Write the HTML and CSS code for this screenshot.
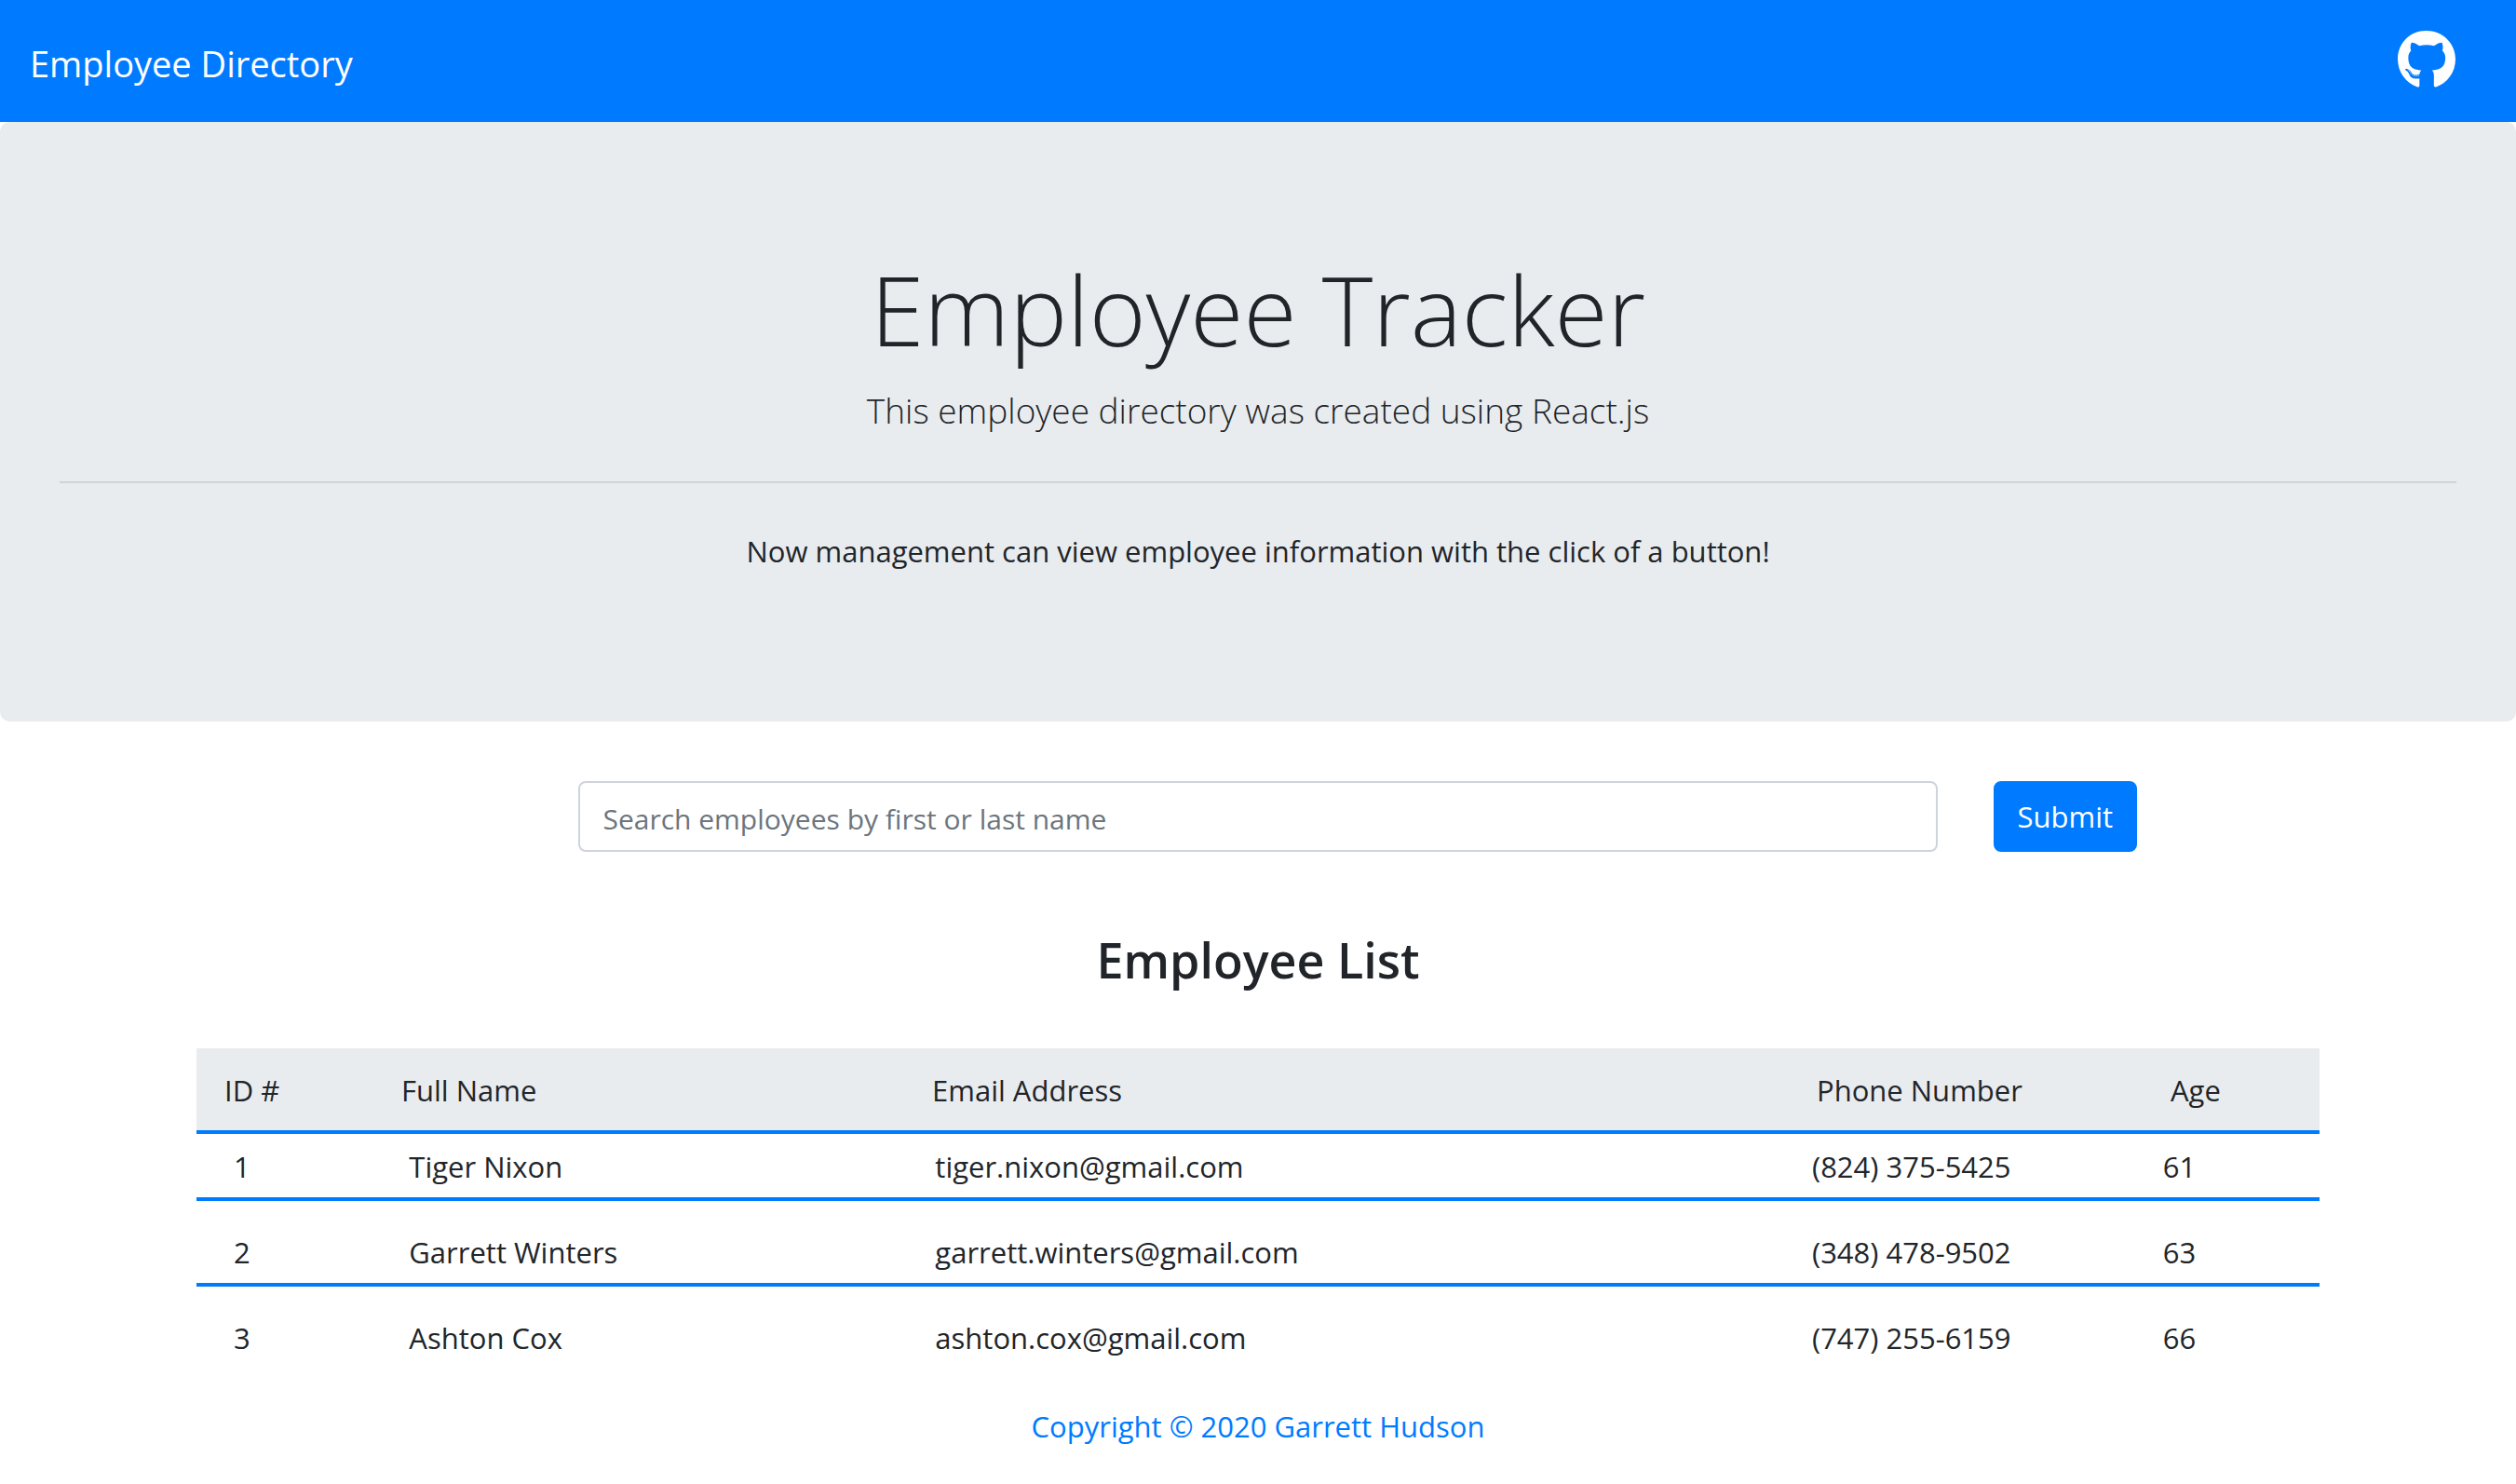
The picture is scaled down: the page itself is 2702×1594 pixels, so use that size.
FILE: index.html
```html
<!DOCTYPE html>
<html lang="en">
<head>
  <meta charset="utf-8">
  <meta name="viewport" content="width=device-width, initial-scale=1">
  <title>Employee Directory</title>
  <link rel="stylesheet" href="styles.css">
</head>
<body>
  <nav class="navbar">
    <a class="navbar-brand" href="#">Employee Directory</a>
    <a class="navbar-link" href="#" aria-label="GitHub">
      <svg class="github-icon" viewBox="0 0 496 512" aria-hidden="true"><path fill="currentColor" d="M165.900 397.400c0 2-2.300 3.600-5.200 3.600-3.300.3-5.600-1.300-5.600-3.600 0-2 2.300-3.600 5.200-3.600 3-.3 5.600 1.300 5.600 3.600zm-31.100-4.500c-.7 2 1.300 4.300 4.300 4.900 2.600 1 5.600 0 6.200-2s-1.300-4.300-4.300-5.200c-2.600-.7-5.500.3-6.200 2.300zm44.200-1.700c-2.900.7-4.900 2.600-4.600 4.900.3 2 2.900 3.300 5.900 2.600 2.900-.7 4.900-2.600 4.600-4.600-.3-1.900-3-3.200-5.900-2.900zM244.800 8C106.100 8 0 113.300 0 252c0 110.900 69.800 205.800 169.500 239.200 12.800 2.300 17.300-5.600 17.300-12.100 0-6.200-.3-40.400-.3-61.400 0 0-70 15-84.700-29.800 0 0-11.400-29.100-27.800-36.600 0 0-22.900-15.700 1.600-15.400 0 0 24.900 2 38.600 25.800 21.900 38.600 58.600 27.500 72.900 20.900 2.300-16 8.800-27.100 16-33.700-55.900-6.200-112.300-14.300-112.300-110.500 0-27.500 7.600-41.300 23.600-58.900-2.600-6.500-11.100-33.300 2.600-67.900 20.900-6.500 69 27 69 27 20-5.600 41.500-8.500 62.800-8.500s42.800 2.900 62.800 8.500c0 0 48.100-33.600 69-27 13.700 34.700 5.200 61.400 2.600 67.900 16 17.700 25.800 31.500 25.800 58.900 0 96.500-58.900 104.200-114.800 110.500 9.200 7.900 17 22.900 17 46.400 0 33.700-.3 75.400-.3 83.600 0 6.500 4.600 14.400 17.300 12.100C428.200 457.800 496 362.900 496 252 496 113.300 383.500 8 244.800 8zM97.200 352.900c-1.300 1-1 3.300.7 5.200 1.600 1.600 3.900 2.300 5.200 1 1.300-1 1-3.300-.7-5.200-1.600-1.600-3.900-2.300-5.200-1zm-10.800-8.100c-.7 1.300.3 2.900 2.300 3.900 1.600 1 3.600.7 4.300-.7.7-1.300-.3-2.900-2.300-3.900-2-.6-3.600-.3-4.300.7zm32.400 35.600c-1.600 1.300-1 4.300 1.300 6.200 2.300 2.300 5.200 2.600 6.500 1 1.300-1.300.7-4.300-1.300-6.200-2.200-2.300-5.200-2.600-6.500-1zm-11.400-14.700c-1.600 1-1.600 3.600 0 5.900 1.600 2.300 4.300 3.300 5.600 2.300 1.600-1.300 1.600-3.900 0-6.200-1.400-2.300-4-3.300-5.600-2z"/></svg>
    </a>
  </nav>

  <header class="jumbotron">
    <h1 class="jumbotron-title">Employee Tracker</h1>
    <p class="jumbotron-lead">This employee directory was created using React.js</p>
    <hr class="jumbotron-rule">
    <p class="jumbotron-text">Now management can view employee information with the click of a button!</p>
  </header>

  <main>
    <form class="search">
      <input class="search-input" type="text" aria-label="Search employees" placeholder="Search employees by first or last name">
      <button class="search-button" type="submit">Submit</button>
    </form>

    <section class="employees">
      <h2 class="employees-title">Employee List</h2>
      <table class="employee-table">
        <thead>
          <tr>
            <th scope="col">ID #</th>
            <th scope="col">Full Name</th>
            <th scope="col">Email Address</th>
            <th scope="col">Phone Number</th>
            <th scope="col">Age</th>
          </tr>
        </thead>
        <tbody>
          <tr>
            <td>1</td>
            <td>Tiger Nixon</td>
            <td>tiger.nixon@gmail.com</td>
            <td>(824) 375-5425</td>
            <td>61</td>
          </tr>
          <tr>
            <td>2</td>
            <td>Garrett Winters</td>
            <td>garrett.winters@gmail.com</td>
            <td>(348) 478-9502</td>
            <td>63</td>
          </tr>
          <tr>
            <td>3</td>
            <td>Ashton Cox</td>
            <td>ashton.cox@gmail.com</td>
            <td>(747) 255-6159</td>
            <td>66</td>
          </tr>
        </tbody>
      </table>
    </section>
  </main>

  <footer class="footer">Copyright © 2020 Garrett Hudson</footer>
</body>
</html>
```

FILE: styles.css
```css
*,
*::before,
*::after {
  box-sizing: border-box;
}

body {
  margin: 0;
  background: #fff;
  color: #212529;
  font-family: "Open Sans", "Noto Sans", sans-serif;
  font-size: 31px;
  line-height: 48px;
}

.navbar {
  display: flex;
  align-items: flex-start;
  justify-content: space-between;
  padding: 32px 65px 33px 32px;
  background: #007bff;
}

.navbar-brand {
  padding-top: 6px;
  color: #fff;
  font-size: 38px;
  line-height: 60px;
  text-decoration: none;
}

.navbar-link {
  display: flex;
  color: #fff;
}

.github-icon {
  width: 62px;
  height: 64px;
}

.jumbotron {
  padding: 128px 64px;
  border-radius: 10px;
  background: #e9ecef;
  text-align: center;
}

.jumbotron-title {
  margin: 0 0 6px;
  font-size: 104px;
  font-weight: 300;
  line-height: 146px;
}

.jumbotron-lead {
  margin: 0;
  font-size: 37px;
  font-weight: 300;
  line-height: 60px;
}

.jumbotron-rule {
  margin: 46px 0 49px;
  border: 0;
  border-top: 2px solid #d1d4d7;
}

.jumbotron-text {
  margin: 0 0 31px;
}

.search {
  display: grid;
  grid-template-columns: 1fr 54% 1fr;
  column-gap: 60px;
  margin: 64px 0 0;
}

.search-input {
  grid-column: 2;
  min-width: 0;
  height: 76px;
  padding: 14px 24px 10px;
  border: 2px solid #ced4da;
  border-radius: 8px;
  background: #fff;
  color: #495057;
  font: inherit;
  font-size: 30px;
}

.search-input::placeholder {
  color: #6c757d;
  opacity: 1;
}

.search-button {
  justify-self: start;
  padding: 12px 24px;
  border: 2px solid #007bff;
  border-radius: 8px;
  background: #007bff;
  color: #fff;
  font: inherit;
}

.employees {
  max-width: 2280px;
  margin: 0 auto;
}

.employees-title {
  margin: 80px 0 60px;
  font-size: 52px;
  font-weight: 600;
  line-height: 71px;
  text-align: center;
}

.employee-table,
.employee-table thead,
.employee-table tbody {
  display: block;
}

.employee-table tr {
  display: grid;
  grid-template-columns: 1fr 3fr 5fr 2fr 1fr;
}

.employee-table th,
.employee-table td {
  padding: 0 0 0 30px;
  font-weight: 400;
  text-align: left;
}

.employee-table thead tr {
  padding: 21px 0 19px;
  border-bottom: 4px solid #007bff;
  background: #e9ecef;
}

.employee-table tbody tr {
  padding: 31px 10px 9px;
  border-bottom: 4px solid #007bff;
}

.employee-table tbody tr:first-child {
  padding-top: 11px;
}

.employee-table tbody tr:last-child {
  border-bottom: 0;
}

.footer {
  margin: 38px 0;
  color: #007bff;
  text-align: center;
}
```
